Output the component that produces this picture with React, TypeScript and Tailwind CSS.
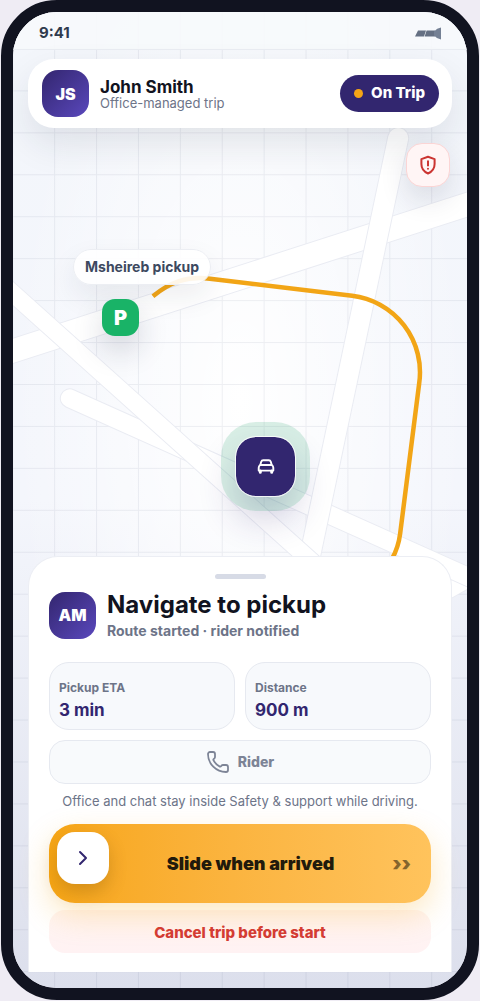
import type { ReactNode } from "react";
import { ChevronRight, Phone } from "lucide-react";

const stats = [
  { label: "Pickup ETA", value: "3 min" },
  { label: "Distance", value: "900 m" },
];

const roads = [
  { d: "M-20 345 L480 184", width: 23 },
  { d: "M400 598 L480 553", width: 15 },
  { d: "M57 386 L481 576", width: 18 },
  { d: "M385 126 L285 600", width: 20 },
  { d: "M-20 263 L321 569", width: 17 },
];

const MapCanvas = () => {
  return (
    <svg
      className="absolute inset-0 h-full w-full"
      viewBox="0 0 454 975"
      preserveAspectRatio="xMidYMin slice"
      aria-hidden="true"
    >
      <defs>
        <radialGradient id="glow" cx="50%" cy="40%" r="50%">
          <stop offset="0%" stopColor="#ffffff" />
          <stop offset="100%" stopColor="#ffffff" stopOpacity="0" />
        </radialGradient>
        <linearGradient id="ground" x1="0" y1="0" x2="0" y2="1">
          <stop offset="0%" stopColor="#f3f6fb" />
          <stop offset="50%" stopColor="#f4f6fc" />
          <stop offset="100%" stopColor="#dcdfec" />
        </linearGradient>
        <pattern
          id="grid"
          x="0.5"
          y="-4.5"
          width="41.85"
          height="41.9"
          patternUnits="userSpaceOnUse"
        >
          <path d="M0 41.4 H42 M41.4 0 V42" stroke="#1f2a5a" strokeOpacity="0.07" />
        </pattern>
      </defs>
      <rect width="454" height="975" fill="url(#ground)" />
      <rect width="454" height="975" fill="url(#glow)" />
      <rect width="454" height="975" fill="url(#grid)" />
      {roads.map((road) => (
        <g key={road.d} strokeLinecap="round">
          <path d={road.d} stroke="#eaecf3" strokeWidth={road.width + 2} />
          <path d={road.d} stroke="#ffffff" strokeWidth={road.width} />
        </g>
      ))}
      <path
        d="M140 284 C157 270 174 263.500 197 266.500 L339 283.500 A77 77 0 0 1 406 371 L387 521 C386 529 384 537 379 546"
        fill="none"
        stroke="#f2a516"
        strokeWidth="4.500"
      />
    </svg>
  );
};

const Avatar = ({ children }: { children: ReactNode }) => {
  return (
    <div className="flex size-[47px] shrink-0 items-center justify-center rounded-2xl bg-linear-135 from-[#33266f] to-[#5a48bd] text-base font-black text-white">
      {children}
    </div>
  );
};

const SignalIcon = () => {
  return (
    <svg className="h-[13px] w-[26px]" viewBox="0 0 26 13" aria-hidden="true">
      <path d="M3 3.500H11L9 9.500H0Z M11.600 3.500H20V9.500H9.600Z" fill="#657083" />
      <path d="M19 4.500 Q22 1 26 0.500 V12.500 Q22 12 19 8.500Z" fill="#748094" />
    </svg>
  );
};

const ShieldIcon = () => {
  return (
    <svg
      className="size-[22px]"
      viewBox="0 0 24 24"
      fill="none"
      stroke="currentColor"
      strokeWidth="2.2"
      strokeLinecap="round"
      strokeLinejoin="round"
      aria-hidden="true"
    >
      <path d="M12 3 L4.800 5.600 V11 C4.800 15.800 7.600 19.400 12 21.300 C16.400 19.400 19.200 15.800 19.200 11 V5.600 Z" />
      <path d="M12 8 V12.500 M12 16 V16.100" />
    </svg>
  );
};

const CarIcon = () => {
  return (
    <svg
      className="h-[15px] w-[18px]"
      viewBox="0 0 18 15"
      fill="none"
      stroke="currentColor"
      strokeWidth="1.9"
      strokeLinecap="round"
      strokeLinejoin="round"
      aria-hidden="true"
    >
      <path d="M3.300 6 L4.200 2.800 Q4.700 1.200 6.200 1.200 H11.800 Q13.300 1.200 13.800 2.800 L14.700 6" />
      <path d="M3.300 6 H14.700 Q16.300 7 16.300 8.800 V11.600 H1.700 V8.800 Q1.700 7 3.300 6 Z" />
      <path d="M3.300 12 V13.200 M14.700 12 V13.200" strokeWidth="3" />
    </svg>
  );
};

const App = () => {
  return (
    <div className="flex min-h-screen flex-col bg-[#efecf4] px-px pb-px font-[Inter,sans-serif]">
      <main className="relative flex flex-1 flex-col overflow-hidden rounded-[56px] border-12 border-[#111320]">
        <MapCanvas />

        <div className="relative flex h-[38px] items-center justify-between border-b border-[#e9ecf2] bg-[#f7f9fc]/90 px-[26px] pt-1.5 text-[15px] font-bold text-[#2f3b4e]">
          <span>9:41</span>
          <SignalIcon />
        </div>

        <header className="relative mx-[15px] mt-[9px] flex items-center gap-[11px] rounded-[26px] bg-white py-[11px] pr-[13px] pl-[14px] shadow-[0_16px_36px_rgba(30,35,60,0.1)]">
          <Avatar>JS</Avatar>
          <div className="min-w-0 flex-1">
            <h2 className="text-[17px] leading-[18px] font-bold text-[#111320]">John Smith</h2>
            <p className="text-[13px] leading-[14px] text-[#6d7488]">Office-managed trip</p>
          </div>
          <span className="flex h-[37px] items-center gap-2 rounded-full bg-[#32266f] px-[14px] text-[15px] font-extrabold text-white">
            <i className="size-[9px] rounded-full bg-[#f6a516]" />
            On Trip
          </span>
        </header>

        <button
          type="button"
          aria-label="Safety and support"
          className="absolute top-[131px] right-[17px] flex size-[44px] items-center justify-center rounded-2xl border border-[#fbd5d5] bg-[#fff5f5] text-[#cb3532] shadow-[0_12px_28px_rgba(30,35,60,0.12)]"
        >
          <ShieldIcon />
        </button>

        <div className="absolute top-[237px] left-[60px] flex h-9 items-center rounded-full border border-[#eceef3] bg-white/90 px-[11px] text-sm font-bold text-[#3d4960] shadow-[0_12px_28px_rgba(30,35,60,0.08)]">
          Msheireb pickup
        </div>
        <div className="absolute top-[287px] left-[89px] flex size-[37px] items-center justify-center rounded-[13px] bg-[#19b367] text-xl font-black text-white shadow-[0_14px_30px_rgba(30,35,60,0.18)]">
          P
        </div>
        <div className="absolute top-[424px] left-[222px] flex size-[61px] items-center justify-center rounded-[21px] border border-white/80 bg-[#32266f] bg-clip-padding text-white shadow-[0_0_0_14px_rgba(25,160,100,0.16),0_20px_36px_rgba(50,38,111,0.24)]">
          <CarIcon />
        </div>

        <section className="relative mx-[15px] mt-auto mb-4 rounded-t-[30px] border border-b-0 border-[#eceef4] bg-white px-5 pt-[17px] pb-[19px]">
          <div className="mx-auto h-[5px] w-[51px] rounded-full bg-[#d7dbe6]" />
          <div className="mt-2 flex items-center gap-[11px]">
            <Avatar>AM</Avatar>
            <div className="pt-1">
              <h1 className="text-2xl leading-7 font-bold text-[#111320]">Navigate to pickup</h1>
              <p className="text-sm leading-6 font-bold text-[#6d7488]">
                Route started · rider notified
              </p>
            </div>
          </div>

          <dl className="mt-[19px] grid grid-cols-2 gap-[10px]">
            {stats.map((stat) => (
              <div
                key={stat.label}
                className="rounded-[20px] border border-[#e6e9f0] bg-[#f7f9fc] px-[9px] pt-[13px] pb-[9px]"
              >
                <dt className="text-xs leading-6 font-bold text-[#6d7488]">{stat.label}</dt>
                <dd className="text-[17px] leading-5 font-bold text-[#32266f]">{stat.value}</dd>
              </div>
            ))}
          </dl>

          <button
            type="button"
            className="mt-[10px] flex h-11 w-full items-center justify-center gap-2 rounded-[16px] border border-[#e6e9f0] bg-[#f8fafc] text-sm font-extrabold text-[#7d8496]"
          >
            <Phone className="size-6" strokeWidth={1.8} />
            Rider
          </button>
          <p className="mt-[7px] text-center text-[13px] leading-5 text-[#6d7488]">
            Office and chat stay inside Safety &amp; support while driving.
          </p>

          <button
            type="button"
            className="relative mt-[13px] flex h-[79px] w-full items-start rounded-[26px] bg-linear-to-r from-[#f7a614] to-[#ffc35c] p-2 text-lg font-black text-[#211a0c] shadow-[0_12px_30px_rgba(247,166,20,0.25)]"
          >
            <span className="flex size-[52px] items-center justify-center rounded-[18px] bg-white text-[#32266f] shadow-[0_8px_18px_rgba(80,50,0,0.22)]">
              <ChevronRight className="size-6" />
            </span>
            <span className="flex-1 self-center">Slide when arrived</span>
            <span className="self-center pr-3 text-xl opacity-55">››</span>
          </button>

          <button
            type="button"
            className="mt-[7px] h-[43px] w-full rounded-[16px] bg-linear-to-b from-[#fff5f2] to-[#fff2f3] pt-1 text-[15px] font-extrabold text-[#d33a35]"
          >
            Cancel trip before start
          </button>
        </section>
      </main>
    </div>
  );
};

export default App;
